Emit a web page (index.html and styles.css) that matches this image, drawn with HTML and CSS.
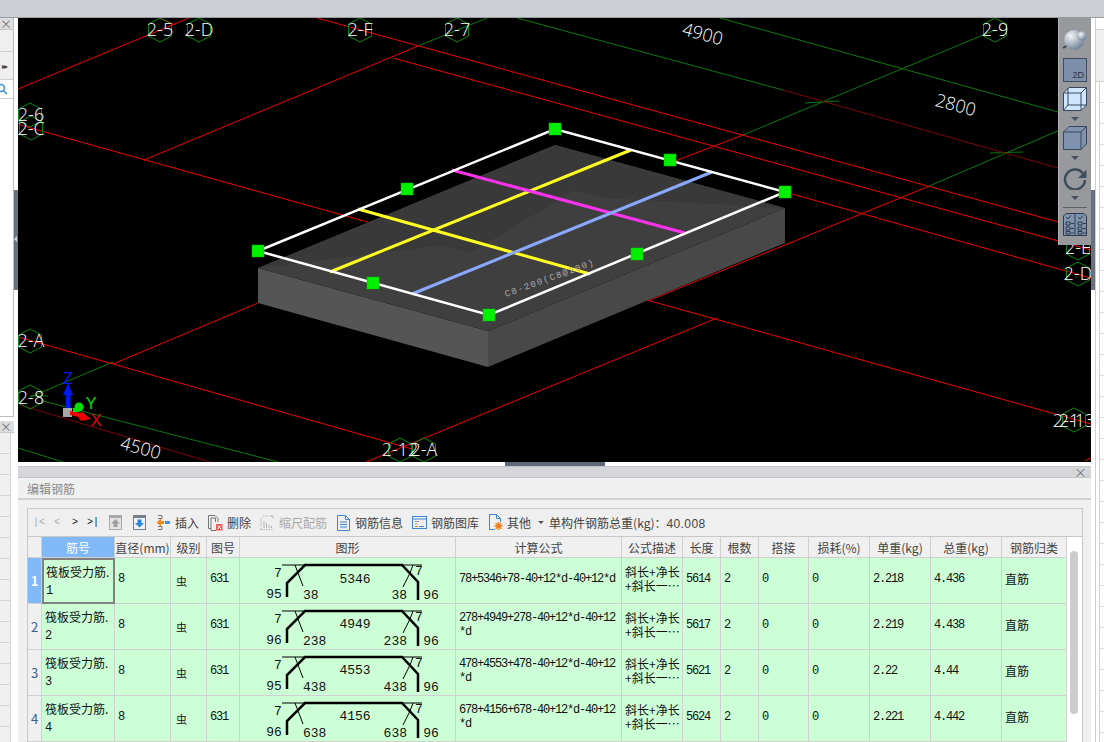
FILE: index.html
```html
<!DOCTYPE html>
<html lang="zh-CN">
<head>
<meta charset="utf-8">
<title>编辑钢筋</title>
<link rel="stylesheet" href="styles.css">
</head>
<body>
<svg class="defs" width="0" height="0" aria-hidden="true">
  <defs>
    <polygon id="hex" points="0,-12 11.5,-6 11.5,6 0,12 -11.5,6 -11.5,-6"/>
    <radialGradient id="ball" cx="35%" cy="30%" r="75%">
      <stop offset="0" stop-color="#f4f6f9"/>
      <stop offset="1" stop-color="#6f7f95"/>
    </radialGradient>
    <g id="rebar">
      <path class="bar-thick" d="M47 39V25L65 7H162L178 24V42"/>
      <path class="bar-thin" d="M42 7H65M55 7L63 28M162 7H182M173 7L170 15L163 29"/>
    </g>
  </defs>
</svg>

<div class="app">
  <div class="topbar"></div>
  <div class="workspace">

    <aside class="dock-left">
      <div class="dock-upper">
        <div class="dock-head">×</div>
        <div class="dock-row dock-row-a"></div>
        <div class="dock-row dock-row-b">▸▸</div>
        <div class="dock-row dock-row-c">
          <svg width="9" height="12" viewBox="0 0 9 12"><circle cx="1" cy="5" r="3.4" class="search-ring"/><path d="M3.5 7.5L7 11" class="search-ring"/></svg>
        </div>
      </div>
      <div class="dock-lower">
        <div class="dock-head">×</div>
        <div class="dock-rows"></div>
      </div>
      <div class="dock-handle"><span class="dock-arrow"></span></div>
    </aside>

    <main class="center">
      <section class="viewport">
        <svg class="scene" width="1073" height="444" viewBox="18 18 1073 444">
          <g class="ln-green">
            <line x1="720" y1="18" x2="1058" y2="112"/>
            <line x1="517" y1="18" x2="783" y2="90"/>
            <line x1="995" y1="30" x2="743" y2="135"/>
            <line x1="418" y1="46" x2="487" y2="18"/>
            <line x1="1060" y1="130" x2="927" y2="187"/>
            <line x1="805" y1="103" x2="839" y2="101"/>
            <line x1="990" y1="153" x2="1023" y2="152"/>
            <line x1="30" y1="397" x2="113" y2="362"/>
            <line x1="30" y1="396" x2="48" y2="396"/>
            <line x1="43" y1="401" x2="440" y2="504"/>
            <line x1="18" y1="448" x2="63" y2="462"/>
          </g>
          <g class="ln-maroon">
            <line x1="783" y1="90" x2="1058" y2="168"/>
            <line x1="20" y1="405" x2="220" y2="465"/>
          </g>
          <g class="ln-red">
            <line x1="18" y1="89" x2="189" y2="18"/>
            <line x1="20" y1="125" x2="1091" y2="424"/>
            <line x1="144" y1="160" x2="418" y2="46"/>
            <line x1="317" y1="18" x2="1091" y2="231"/>
            <line x1="393" y1="58" x2="1091" y2="250"/>
            <line x1="785" y1="192" x2="1091" y2="278"/>
            <line x1="743" y1="135" x2="670" y2="163"/>
            <line x1="927" y1="187" x2="650" y2="300"/>
            <line x1="717" y1="318" x2="366" y2="462"/>
            <line x1="18" y1="337" x2="412" y2="449"/>
            <line x1="113" y1="364" x2="258" y2="303"/>
            <line x1="1085" y1="461" x2="1091" y2="458"/>
            <line x1="160" y1="18" x2="175" y2="25"/>
          </g>

          <polygon class="slab-left" points="258,268 488,331 488,367 258,303"/>
          <polygon class="slab-right" points="488,331 785,208 785,243 488,367"/>
          <polygon class="slab-top" points="258,268 555,145 785,208 488,331"/>
          <polygon class="slab-shade" points="258,268 555,145 785,208 607,198 573,191 470,253 442,245"/>

          <line class="ln-yellow" x1="358" y1="209" x2="590" y2="274"/>
          <line class="ln-yellow" x1="330" y1="272" x2="631" y2="150"/>
          <line class="ln-magenta" x1="452" y1="170" x2="685" y2="233"/>
          <line class="ln-blue" x1="412" y1="294" x2="712" y2="172"/>
          <polygon class="ln-white" points="258,251 555,129 785,192 489,315"/>
          <text class="slab-label" transform="translate(506 297) rotate(-20)">C8-200(C8@200)</text>

          <g class="handle">
            <rect x="252" y="245" width="12" height="12"/>
            <rect x="549" y="123" width="12" height="12"/>
            <rect x="779" y="186" width="12" height="12"/>
            <rect x="483" y="309" width="12" height="12"/>
            <rect x="401" y="183" width="12" height="12"/>
            <rect x="664" y="154" width="12" height="12"/>
            <rect x="631" y="248" width="12" height="12"/>
            <rect x="367" y="277" width="12" height="12"/>
          </g>

          <g class="hexes">
            <use href="#hex" x="160" y="30"/>
            <use href="#hex" x="199" y="30"/>
            <use href="#hex" x="360" y="30"/>
            <use href="#hex" x="457" y="30"/>
            <use href="#hex" x="995" y="30"/>
            <use href="#hex" x="30" y="115"/>
            <use href="#hex" x="31" y="128"/>
            <use href="#hex" x="30" y="341"/>
            <use href="#hex" x="30" y="397"/>
            <use href="#hex" x="400" y="450"/>
            <use href="#hex" x="424" y="450"/>
            <use href="#hex" x="1074" y="420"/>
            <use href="#hex" x="1078" y="248"/>
            <use href="#hex" x="1078" y="274"/>
          </g>
          <g class="axis-labels">
            <text x="160" y="36">2-5</text>
            <text x="199" y="36">2-D</text>
            <text x="360" y="36">2-F</text>
            <text x="457" y="36">2-7</text>
            <text x="995" y="36">2-9</text>
            <text x="31" y="121">2-6</text>
            <text x="31" y="135">2-C</text>
            <text x="31" y="347">2-A</text>
            <text x="31" y="404">2-8</text>
            <text x="400" y="456">2-12</text>
            <text x="424" y="456">2-A</text>
            <text x="1066" y="427">2-1</text>
            <text x="1077" y="427">2-13</text>
            <text x="1078" y="254">2-E</text>
            <text x="1078" y="280">2-D</text>
          </g>
          <g class="dim-labels">
            <text transform="translate(701 40) rotate(15)">4900</text>
            <text transform="translate(954 111) rotate(15)">2800</text>
            <text transform="translate(139 454) rotate(15)">4500</text>
          </g>

          <g class="gizmo">
            <path class="giz-z" d="M65.700 408V395H63L68 383L73 395H70.700V408Z"/>
            <rect class="giz-cube" x="63" y="408" width="9" height="9"/>
            <path class="giz-x" d="M70 411L80 413L82 412L91 419L81 421L78 417L70 415Z"/>
            <circle class="giz-y" cx="79" cy="407" r="4.500"/>
            <rect class="giz-y" x="73" y="408" width="6" height="4"/>
            <text class="giz-tz" x="68" y="384">Z</text>
            <text class="giz-ty" x="91" y="409">Y</text>
            <text class="giz-tx" x="96" y="426">X</text>
          </g>
        </svg>

        <div class="view-tools">
          <svg class="vt vt-globe" width="26" height="22" viewBox="0 0 26 22">
            <path class="globe-ring" d="M1 19L8 15"/>
            <circle cx="12" cy="11" r="10" fill="url(#ball)"/>
            <circle cx="20" cy="7" r="4.500" fill="url(#ball)"/>
          </svg>
          <div class="vt vt-2d">2D</div>
          <svg class="vt vt-cube" width="24" height="24" viewBox="0 0 24 24">
            <path class="cube-light" d="M.5 6L6 .5H23.500V18L18 23.500H.5Z"/>
            <path class="cube-line" d="M.5 6L6 .5H23.500V18L18 23.500H.5ZM.5 6H18V23.500M18 6L23.500 .5M5 1V18H23.500M5 18L.5 23.500"/>
          </svg>
          <span class="vt-caret"></span>
          <svg class="vt vt-cube2" width="24" height="24" viewBox="0 0 24 24">
            <path class="cube-dark" d="M.5 6L6 .5H23.500V18L18 23.500H.5Z"/>
            <path class="cube-line" d="M.5 6L6 .5H23.500V18L18 23.500H.5ZM.5 6H18V23.500M18 6L23.500 .5"/>
          </svg>
          <span class="vt-caret"></span>
          <svg class="vt vt-rotate" width="24" height="22" viewBox="0 0 24 22">
            <path class="rotate-arc" d="M20 5.500A10 10 0 1 0 22 12"/>
            <path class="rotate-head" d="M23.500 1.500V10H15Z"/>
          </svg>
          <span class="vt-caret"></span>
          <span class="vt-sep"></span>
          <svg class="vt vt-grid" width="24" height="23" viewBox="0 0 24 23">
            <path class="grid-fill" d="M.5 3L3 .5H21L23.500 3V22.500H.5Z"/>
            <path class="grid-line" d="M.5 3L3 .5H21L23.500 3V22.500H.5ZM12 .5V22.500M3 9H7V12H3ZM3 14H7V17H3ZM3 18.500H7V21H3ZM15 9H19V12H15ZM15 14H19V17H15ZM15 18.500H19V21H15ZM8 10.500H11M8 15.500H11M8 20H11M20 10.500H23M20 15.500H23M20 20H23M3 4L5 6L8 2.500M15 4L17 6L20 2.500"/>
          </svg>
        </div>
      </section>

      <div class="splitter"><span class="split-grip"></span></div>

      <section class="panel">
        <div class="panel-bar"><span class="panel-close">×</span></div>
        <div class="panel-title">编辑钢筋</div>
        <div class="editor">
          <div class="toolbar">
            <div class="nav">
              <span class="nav-btn off">|&lt;</span>
              <span class="nav-btn off">&lt;</span>
              <span class="nav-btn">&gt;</span>
              <span class="nav-btn">&gt;|</span>
            </div>
            <svg class="tb-move tb-up" width="13" height="15" viewBox="0 0 13 15">
              <rect class="mv-frame-off" x=".5" y=".5" width="12" height="14"/>
              <path class="mv-top-off" d="M1 1H12V3H1Z"/>
              <path class="mv-arrow-off" d="M6.500 4L11 8.500H8.500V12H4.500V8.500H2Z"/>
            </svg>
            <svg class="tb-move tb-down" width="13" height="15" viewBox="0 0 13 15">
              <rect class="mv-frame" x=".5" y=".5" width="12" height="14"/>
              <path class="mv-top" d="M1 1H12V3H1Z"/>
              <path class="mv-arrow" d="M6.500 12.500L2 8H4.500V4.500H8.500V8H11Z"/>
            </svg>
            <div class="tool tool-first">
              <svg width="15" height="15" viewBox="0 0 15 15">
                <path class="ic-gray" d="M2 .5H6V3.500H2M2 11.500H6V14.500H2"/>
                <path class="ic-orange-fill" d="M.5 7.500L5 3.500V6H8V9H5V11.500Z"/>
                <rect class="ic-blue-fill" x="9" y="6" width="5" height="3"/>
              </svg>
              <span>插入</span>
            </div>
            <div class="tool">
              <svg width="15" height="16" viewBox="0 0 15 16">
                <path class="ic-gray" d="M3 13.500H.5V.5H7L10 3.500V7M3 3H7.500V7M3 3V15.500H8"/>
                <rect class="ic-red-fill" x="8" y="9" width="6.500" height="6.500"/>
                <path class="ic-white" d="M9.500 10.500L13 14M13 10.500L9.500 14"/>
              </svg>
              <span>删除</span>
            </div>
            <div class="tool off">
              <svg width="15" height="15" viewBox="0 0 15 15">
                <path class="ic-faint" d="M1 14.500V2M1 14.500H13M3 1H12" stroke-dasharray="1.500 1"/>
                <path class="ic-faint" d="M4 13V6M6.500 13V8M9 13V10M11.500 13V11"/>
                <path class="ic-faint" d="M11 1H13V3"/>
              </svg>
              <span>缩尺配筋</span>
            </div>
            <div class="tool">
              <svg width="15" height="16" viewBox="0 0 15 16">
                <path class="ic-blue" d="M1.500 .5H9.500L13.500 4.500V15.500H1.500ZM9.500 .5V4.500H13.500"/>
                <path class="ic-blue" d="M4 7H11M4 9.500H11M4 12H11"/>
              </svg>
              <span>钢筋信息</span>
            </div>
            <div class="tool">
              <svg width="15" height="13" viewBox="0 0 15 13">
                <rect class="ic-blue" x=".5" y=".5" width="14" height="12"/>
                <path class="ic-blue" d="M.5 3H14.500"/>
                <path class="ic-gray-thin" d="M3 5.500H7M3 8H5.500"/>
                <path class="ic-orange" d="M3 10.500H6"/>
                <path class="ic-blue" d="M7 10.500H12"/>
              </svg>
              <span>钢筋图库</span>
            </div>
            <div class="tool">
              <svg width="15" height="17" viewBox="0 0 15 17">
                <path class="ic-blue" d="M7 15.500H1.500V.5H8.500L12.500 4.500V8M8.500 .5V4.500H12.500"/>
                <circle class="ic-gear" cx="10.500" cy="12" r="2.500"/>
                <path class="ic-gear-teeth" d="M10.500 8V16M6.500 12H14.500M7.700 9.200L13.300 14.800M13.300 9.200L7.700 14.800"/>
              </svg>
              <span>其他</span>
              <span class="tb-caret"></span>
            </div>
            <div class="total">单构件钢筋总重(kg)：<span class="total-val">40.008</span></div>
          </div>

          <div class="grid-wrap">
            <table class="grid">
              <colgroup>
                <col class="w14"><col class="w73"><col class="w56"><col class="w36"><col class="w33"><col class="w216"><col class="w166"><col class="w61"><col class="w38"><col class="w38"><col class="w50"><col class="w61"><col class="w61"><col class="w71"><col class="w65">
              </colgroup>
              <thead>
                <tr>
                  <th></th><th class="active">筋号</th><th>直径(mm)</th><th>级别</th><th>图号</th><th>图形</th><th>计算公式</th><th>公式描述</th><th>长度</th><th>根数</th><th>搭接</th><th>损耗(%)</th><th>单重(kg)</th><th>总重(kg)</th><th>钢筋归类</th>
                </tr>
              </thead>
              <tbody>
                <tr>
                  <th class="rowh rowh-on">1</th>
                  <td class="name name-on">筏板受力筋.<br><span class="num">1</span></td>
                  <td class="num">8</td><td class="grade">虫</td><td class="num">631</td>
                  <td class="shape"><svg width="215" height="45" viewBox="0 0 215 45"><use href="#rebar"/><g class="shape-text"><text x="38" y="19">7</text><text x="34" y="40">95</text><text class="lab-l" x="63" y="41">38</text><text x="115" y="25">5346</text><text class="lab-r" x="167" y="41">38</text><text x="191" y="41">96</text><text x="179" y="17">7</text></g></svg></td>
                  <td class="num formula">78+5346+78-40+12*d-40+12*d</td>
                  <td class="desc">斜长+净长<br>+斜长一…</td>
                  <td class="num">5614</td><td class="num">2</td><td class="num">0</td><td class="num">0</td><td class="num">2.218</td><td class="num">4.436</td><td class="kind">直筋</td>
                </tr>
                <tr>
                  <th class="rowh">2</th>
                  <td class="name">筏板受力筋.<br><span class="num">2</span></td>
                  <td class="num">8</td><td class="grade">虫</td><td class="num">631</td>
                  <td class="shape"><svg width="215" height="45" viewBox="0 0 215 45"><use href="#rebar"/><g class="shape-text"><text x="38" y="19">7</text><text x="34" y="40">96</text><text class="lab-l" x="63" y="41">238</text><text x="115" y="24">4949</text><text class="lab-r" x="167" y="41">238</text><text x="191" y="41">96</text><text x="179" y="17">7</text></g></svg></td>
                  <td class="num formula">278+4949+278-40+12*d-40+12<br>*d</td>
                  <td class="desc">斜长+净长<br>+斜长一…</td>
                  <td class="num">5617</td><td class="num">2</td><td class="num">0</td><td class="num">0</td><td class="num">2.219</td><td class="num">4.438</td><td class="kind">直筋</td>
                </tr>
                <tr>
                  <th class="rowh">3</th>
                  <td class="name">筏板受力筋.<br><span class="num">3</span></td>
                  <td class="num">8</td><td class="grade">虫</td><td class="num">631</td>
                  <td class="shape"><svg width="215" height="45" viewBox="0 0 215 45"><use href="#rebar"/><g class="shape-text"><text x="38" y="19">7</text><text x="34" y="40">95</text><text class="lab-l" x="63" y="41">438</text><text x="115" y="24">4553</text><text class="lab-r" x="167" y="41">438</text><text x="191" y="41">96</text><text x="179" y="17">7</text></g></svg></td>
                  <td class="num formula">478+4553+478-40+12*d-40+12<br>*d</td>
                  <td class="desc">斜长+净长<br>+斜长一…</td>
                  <td class="num">5621</td><td class="num">2</td><td class="num">0</td><td class="num">0</td><td class="num">2.22</td><td class="num">4.44</td><td class="kind">直筋</td>
                </tr>
                <tr>
                  <th class="rowh">4</th>
                  <td class="name">筏板受力筋.<br><span class="num">4</span></td>
                  <td class="num">8</td><td class="grade">虫</td><td class="num">631</td>
                  <td class="shape"><svg width="215" height="45" viewBox="0 0 215 45"><use href="#rebar"/><g class="shape-text"><text x="38" y="19">7</text><text x="34" y="40">96</text><text class="lab-l" x="63" y="41">638</text><text x="115" y="24">4156</text><text class="lab-r" x="167" y="41">638</text><text x="191" y="41">96</text><text x="179" y="17">7</text></g></svg></td>
                  <td class="num formula">678+4156+678-40+12*d-40+12<br>*d</td>
                  <td class="desc">斜长+净长<br>+斜长一…</td>
                  <td class="num">5624</td><td class="num">2</td><td class="num">0</td><td class="num">0</td><td class="num">2.221</td><td class="num">4.442</td><td class="kind">直筋</td>
                </tr>
              </tbody>
            </table>
            <div class="scroll"><span class="scroll-thumb"></span></div>
          </div>
        </div>
      </section>
    </main>

    <aside class="dock-right">
      <div class="dock-handle-r"></div>
      <div class="dock-right-body">
        <div class="dr-head"></div>
        <div class="dr-tab"></div>
        <div class="dr-rows"></div>
      </div>
    </aside>
  </div>
</div>
</body>
</html>
```
FILE: styles.css
```css
* { box-sizing: border-box; }
html, body { margin: 0; padding: 0; }
body {
  width: 1104px;
  height: 742px;
  overflow: hidden;
  background: #fff;
  font-family: "Noto Sans CJK SC", "Liberation Sans", sans-serif;
  font-size: 12px;
  color: #333;
}
.defs { position: absolute; }
.app { display: flex; flex-direction: column; height: 742px; }
.topbar { height: 18px; flex: none; background: #cbced2; border-bottom: 1px solid #9b9ea3; }
.workspace { display: flex; flex: 1; min-height: 0; }

/* left dock */
.dock-left { position: relative; width: 18px; flex: none; display: flex; flex-direction: column; }
.dock-upper { width: 14px; height: 399px; border-right: 1px solid #bdbdbd; border-bottom: 1px solid #bdbdbd; }
.dock-lower { width: 14px; flex: 1; margin-top: 4px; display: flex; flex-direction: column; }
.dock-head { height: 12px; background: #dcdde0; color: #777; font-size: 12px; line-height: 12px; text-align: right; padding-right: 2px; border-bottom: 1px solid #c8c8c8; }
.dock-row { border-bottom: 1px solid #cfcfcf; }
.dock-row-a { height: 22px; background: #efeff0; }
.dock-row-b { height: 28px; background: #efeff0; font-size: 8px; line-height: 28px; letter-spacing: -2px; padding-left: 2px; color: #444; }
.dock-row-c { height: 19px; background: #fff; display: flex; align-items: center; }
.search-ring { fill: none; stroke: #3f8fc8; stroke-width: 1.5; }
.dock-rows {
  flex: 1;
  width: 11px;
  background: repeating-linear-gradient(#efefef 0, #efefef 20px, #d4d4d4 20px, #d4d4d4 21px);
  border-right: 1px solid #d4d4d4;
}
.dock-handle { position: absolute; left: 14px; top: 172px; width: 4px; height: 100px; background: #677180; }
.dock-arrow { position: absolute; top: 46px; left: 0; border: 3px solid transparent; border-right-color: #cfd3d8; border-left: 0; }

/* center */
.center { width: 1073px; flex: none; display: flex; flex-direction: column; }
.viewport { position: relative; height: 444px; flex: none; background: #000; overflow: hidden; }
.scene { display: block; }
.ln-green line { stroke: #0b7a0b; stroke-width: 1; }
.ln-maroon line { stroke: #7c0808; stroke-width: 1; }
.ln-red line { stroke: #f00000; stroke-width: 1; }
.slab-left { fill: #555; }
.slab-right { fill: #484848; }
.slab-top { fill: #3f3f3f; }
.slab-shade { fill: #393939; }
.ln-yellow { stroke: #ffff22; stroke-width: 3; }
.ln-magenta { stroke: #ff33ee; stroke-width: 3; }
.ln-blue { stroke: #8aa8ff; stroke-width: 3; }
.ln-white { fill: none; stroke: #fff; stroke-width: 2.5; }
.slab-label { font-family: "Liberation Mono", monospace; font-size: 9px; letter-spacing: 1.4px; fill: #aaa; }
.handle rect { fill: #00f000; stroke: #00c000; stroke-width: 0.5; }
.hexes use { fill: none; stroke: #0a8a0a; stroke-width: 1; }
.axis-labels text { fill: #fff; font-family: "Open Sans", "Liberation Sans", sans-serif; font-weight: 300; font-size: 18px; text-anchor: middle; }
.dim-labels text { fill: #fff; font-family: "Open Sans", "Liberation Sans", sans-serif; font-weight: 300; font-size: 18px; text-anchor: middle; }
.giz-cube { fill: #a8a8a8; }
.giz-z { fill: #0018f0; }
.giz-x { fill: #f00000; }
.giz-y { fill: #00e000; }
.giz-tz, .giz-ty, .giz-tx { font-family: "Liberation Sans", sans-serif; font-size: 16px; text-anchor: middle; }
.giz-tz { fill: #0018f0; }
.giz-ty { fill: #00e000; }
.giz-tx { fill: #f00000; }

/* view tools over the canvas */
.view-tools {
  position: absolute;
  top: 0;
  right: 0;
  width: 33px;
  height: 227px;
  background: #98999c;
  border-left: 1px solid #b0b1b4;
  display: flex;
  flex-direction: column;
  align-items: center;
  padding-top: 11px;
}
.vt { display: block; flex: none; }
.vt-2d {
  width: 24px;
  height: 24px;
  margin-top: 7px;
  background: #7d8fab;
  border: 1px solid #3f4c5d;
  font-family: "Liberation Sans", sans-serif;
  font-size: 9px;
  color: #26313f;
  text-align: right;
  padding-right: 2px;
  padding-top: 11px;
  line-height: 10px;
}
.vt-cube { margin-top: 5px; }
.vt-cube2 { margin-top: 5px; }
.vt-rotate { margin-top: 8px; }
.globe-ring { stroke: #39444f; stroke-width: 2; fill: none; }
.cube-light { fill: #cfe6ff; }
.cube-dark { fill: #7f92ae; }
.cube-line { fill: none; stroke: #39465a; stroke-width: 1; }
.rotate-arc { fill: none; stroke: #3f4c5c; stroke-width: 2.5; }
.rotate-head { fill: #3f4c5c; }
.vt-caret { flex: none; margin-top: 6px; border: 4px solid transparent; border-top: 4px solid #44505e; border-bottom: 0; }
.vt-sep { flex: none; width: 24px; height: 1px; margin-top: 7px; background: #5c6167; }
.vt-grid { margin-top: 5px; }
.grid-fill { fill: #7f92ae; }
.grid-line { fill: none; stroke: #2f3b4b; stroke-width: 1; }

.splitter { height: 4px; flex: none; background: #fff; display: flex; justify-content: center; }
.split-grip { width: 100px; height: 4px; background: #5e6876; }

/* editor panel */
.panel { flex: 1; min-height: 0; background: #f0f0f0; display: flex; flex-direction: column; }
.panel-bar { height: 12px; flex: none; background: #d4d6da; border-top: 1px solid #c4c6ca; border-bottom: 1px solid #c4c6ca; text-align: right; padding-right: 4px; }
.panel-close { display: block; font-size: 13px; line-height: 10px; color: #777; }
.panel-title { height: 22px; flex: none; padding-left: 9px; line-height: 22px; color: #8a8a8a; font-size: 12px; border-bottom: 2px solid #d0d0d0; }
.editor { flex: 1; min-height: 0; margin: 8px 8px 0 9px; border: 1px solid #c8c8c8; border-bottom: 0; display: flex; flex-direction: column; overflow: hidden; }
.toolbar { height: 28px; flex: none; display: flex; align-items: center; padding-left: 2px; background: #efefef; color: #444; border-bottom: 1px solid #c8c8c8; }
.nav { display: flex; }
.nav-btn { width: 18px; text-align: center; font-family: "Liberation Mono", monospace; font-size: 10px; color: #222; }
.nav-btn.off { color: #aaa; }
.tb-move { flex: none; }
.tb-up { margin-left: 7px; }
.tb-down { margin-left: 11px; }
.tool { display: flex; align-items: center; gap: 4px; margin-left: 9px; }
.tool svg { flex: none; }
.tool-first { margin-left: 10px; }
.tool.off { color: #aaa; }
.mv-frame-off { fill: #e4e4e4; stroke: #a8a8a8; }
.mv-top-off { fill: #a8a8a8; }
.mv-arrow-off { fill: #a0a0a0; }
.mv-frame { fill: #eef0f2; stroke: #74808e; }
.mv-top { fill: #74808e; }
.mv-arrow { fill: #2e86de; }
.ic-gray { fill: none; stroke: #777; stroke-width: 1; }
.ic-gray-thin { fill: none; stroke: #999; stroke-width: 1; }
.ic-faint { fill: none; stroke: #b4b4b4; stroke-width: 1; }
.ic-orange { fill: none; stroke: #e8892a; stroke-width: 1; }
.ic-orange-fill { fill: #ee8a1e; }
.ic-blue-fill { fill: #4a90d9; }
.ic-blue { fill: none; stroke: #3c86d4; stroke-width: 1; }
.ic-red-fill { fill: #e65a5a; }
.ic-white { fill: none; stroke: #fff; stroke-width: 1; }
.ic-gear { fill: #ee7d1a; }
.ic-gear-teeth { fill: none; stroke: #ee7d1a; stroke-width: 1.5; stroke-dasharray: 1.500 5 1.500; }
.tb-caret { width: 0; height: 0; margin-left: 3px; border: 3px solid transparent; border-top: 3px solid #555; border-bottom: 0; }
.total { margin-left: 5px; white-space: nowrap; }
.total-val { font-family: "Liberation Sans", sans-serif; font-size: 12px; letter-spacing: .4px; }

/* grid */
.grid-wrap { flex: 1; min-height: 0; display: flex; }
.grid { table-layout: fixed; width: 1039px; flex: none; border-collapse: separate; border-spacing: 0; align-self: flex-start; }
.w14 { width: 14px; } .w73 { width: 73px; } .w56 { width: 56px; } .w36 { width: 36px; } .w33 { width: 33px; }
.w216 { width: 216px; } .w166 { width: 166px; } .w61 { width: 61px; } .w38 { width: 38px; } .w50 { width: 50px; }
.w71 { width: 71px; } .w65 { width: 65px; }
.grid th, .grid td { padding: 0; border-right: 1px solid #d0d0d0; border-bottom: 1px solid #d0d0d0; }
.grid thead th { height: 21px; background: #f0f0f0; font-weight: 400; font-size: 12px; color: #444; white-space: nowrap; overflow: visible; }
.grid thead th.active { background: #80b8f8; color: #fff; }
.grid tbody tr { height: 46px; }
.grid td { background: #ccffd6; color: #111; padding: 0 0 4px 3px; vertical-align: middle; overflow: hidden; white-space: nowrap; }
.rowh { background: #f0f0f0; color: #3a5f95; font-weight: 400; font-size: 13px; }
.grid tbody th.rowh-on { background: #80b8f8; color: #fff; font-weight: 700; }
.num { font-family: "Liberation Mono", monospace; font-size: 12px; letter-spacing: -1.2px; }
.grid td.name { line-height: 17px; padding: 0 0 0 3px; font-size: 12px; }
.grid td.name-on { border: 2px solid #808080; padding-left: 2px; }
.grid td.grade { font-size: 11px; padding-left: 5px; padding-bottom: 0; }
.grid td.shape { padding: 0; }
.shape svg { display: block; }
.bar-thick { fill: none; stroke: #000; stroke-width: 2.5; }
.bar-thin { fill: none; stroke: #000; stroke-width: 1; }
.shape-text text { font-family: "Liberation Mono", monospace; font-size: 13px; text-anchor: middle; fill: #111; }
.shape-text text.lab-l { text-anchor: start; }
.shape-text text.lab-r { text-anchor: end; }
.grid td.formula { line-height: 14px; }
.grid td.desc { line-height: 14px; padding-bottom: 3px; font-size: 12px; }
.grid td.kind { font-size: 12px; }
.scroll { flex: 1; background: #fff; position: relative; }
.scroll-thumb { position: absolute; left: 3px; top: 14px; width: 8px; height: 163px; background: #cccccc; border-radius: 4px; }

/* right dock */
.dock-right { position: relative; width: 13px; flex: none; background: #fff; }
.dock-handle-r { position: absolute; left: 0; top: 172px; width: 4px; height: 100px; background: #677180; }
.dock-right-body { margin-left: 4px; height: 100%; border-left: 1px solid #cfcfcf; display: flex; flex-direction: column; }
.dr-head { height: 12px; flex: none; background: #fff; border-bottom: 1px solid #cfcfcf; }
.dr-tab { height: 52px; flex: none; background: #f0f0f0; border-bottom: 1px solid #cfcfcf; }
.dr-rows { flex: 1; margin-left: 3px; border-left: 1px solid #cfcfcf; background: repeating-linear-gradient(#fff 0, #fff 20px, #d8d8d8 20px, #d8d8d8 21px); }
```
